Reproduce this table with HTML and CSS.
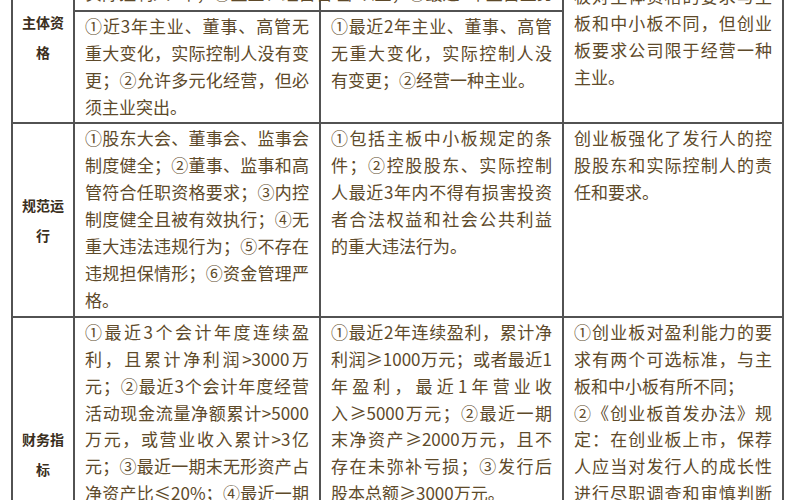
FILE: index.html
```html
<!DOCTYPE html>
<html lang="zh-CN">
<head>
<meta charset="utf-8">
<title>主板、中小板与创业板发行条件对比</title>
<link rel="stylesheet" href="styles.css">
</head>
<body>
<table class="cmp">
  <colgroup>
    <col class="c-label">
    <col class="c-main">
    <col class="c-sme">
    <col class="c-note">
  </colgroup>
  <tbody>
    <tr class="row-top">
      <td class="label" rowspan="2">主体资格</td>
      <td class="cell">
        <span class="ln">依法设立且合法存续的股份</span>
        <span class="ln end">实际控制人3年；②主业、经营管理</span>
      </td>
      <td class="cell">
        <span class="ln">有限公司，持续经营时间在</span>
        <span class="ln end">3年以上；③最近2年主营业务</span>
      </td>
      <td class="cell span-note" rowspan="2">
        <span class="ln">创业板对主体资格的要求</span>
        <span class="ln">板对主体资格的要求与主</span>
        <span class="ln">板和中小板不同，但创业</span>
        <span class="ln">板要求公司限于经营一种</span>
        <span class="ln end">主业。</span>
      </td>
    </tr>
    <tr>
      <td class="cell">
        <span class="ln">①近3年主业、董事、高管无</span>
        <span class="ln">重大变化，实际控制人没有变</span>
        <span class="ln">更；②允许多元化经营，但必</span>
        <span class="ln end">须主业突出。</span>
      </td>
      <td class="cell">
        <span class="ln">①最近2年主业、董事、高管</span>
        <span class="ln">无重大变化，实际控制人没</span>
        <span class="ln end">有变更；②经营一种主业。</span>
      </td>
    </tr>
    <tr>
      <td class="label">规范运行</td>
      <td class="cell">
        <span class="ln">①股东大会、董事会、监事会</span>
        <span class="ln">制度健全；②董事、监事和高</span>
        <span class="ln">管符合任职资格要求；③内控</span>
        <span class="ln">制度健全且被有效执行；④无</span>
        <span class="ln">重大违法违规行为；⑤不存在</span>
        <span class="ln">违规担保情形；⑥资金管理严</span>
        <span class="ln end">格。</span>
      </td>
      <td class="cell">
        <span class="ln">①包括主板中小板规定的条</span>
        <span class="ln">件；②控股股东、实际控制</span>
        <span class="ln">人最近3年内不得有损害投资</span>
        <span class="ln">者合法权益和社会公共利益</span>
        <span class="ln end">的重大违法行为。</span>
      </td>
      <td class="cell">
        <span class="ln">创业板强化了发行人的控</span>
        <span class="ln">股股东和实际控制人的责</span>
        <span class="ln end">任和要求。</span>
      </td>
    </tr>
    <tr>
      <td class="label">财务指标</td>
      <td class="cell">
        <span class="ln">①最近3个会计年度连续盈</span>
        <span class="ln">利，且累计净利润&gt;3000万</span>
        <span class="ln">元；②最近3个会计年度经营</span>
        <span class="ln">活动现金流量净额累计&gt;5000</span>
        <span class="ln">万元，或营业收入累计&gt;3亿</span>
        <span class="ln">元；③最近一期末无形资产占</span>
        <span class="ln">净资产比≤20%；④最近一期</span>
        <span class="ln">末不存在未弥补亏损；⑤发</span>
        <span class="ln end">行前股本总额≥3000万元。</span>
      </td>
      <td class="cell">
        <span class="ln">①最近2年连续盈利，累计净</span>
        <span class="ln">利润≥1000万元；或者最近1</span>
        <span class="ln">年盈利，最近1年营业收</span>
        <span class="ln">入≥5000万元；②最近一期</span>
        <span class="ln">末净资产≥2000万元，且不</span>
        <span class="ln">存在未弥补亏损；③发行后</span>
        <span class="ln end">股本总额≥3000万元。</span>
      </td>
      <td class="cell">
        <span class="ln">①创业板对盈利能力的要</span>
        <span class="ln">求有两个可选标准，与主</span>
        <span class="ln end">板和中小板有所不同；</span>
        <span class="ln">②《创业板首发办法》规</span>
        <span class="ln">定：在创业板上市，保荐</span>
        <span class="ln">人应当对发行人的成长性</span>
        <span class="ln">进行尽职调查和审慎判断</span>
        <span class="ln">并出具专项意见；发行人</span>
        <span class="ln">为自主创新企业的，还应</span>
        <span class="ln end">当说明其自主创新能力。</span>
      </td>
    </tr>
  </tbody>
</table>
</body>
</html>
```

FILE: styles.css
```css
html, body {
  margin: 0;
  padding: 0;
  background: #ffffff;
}

body {
  font-family: "Noto Sans CJK SC", "Noto Sans", sans-serif;
  color: #5e4a2a;
  overflow: hidden;
}

.cmp {
  table-layout: fixed;
  border-collapse: collapse;
  width: 771px;
  margin: -50px 0 0 11px;
}

.c-label { width: 62px; }
.c-main  { width: 246px; }
.c-sme   { width: 243px; }
.c-note  { width: 220px; }

.cmp td {
  border: 2px solid #525252;
}

.label {
  vertical-align: middle;
  text-align: center;
  padding: 0 5px;
  font-size: 14px;
  line-height: 30px;
  font-weight: 700;
  color: #3b2f1d;
}

.cell {
  vertical-align: top;
  padding: 1px 10px 2px 10px;
  font-size: 17px;
  line-height: 26.9px;
}

.row-top .cell {
  padding-bottom: 3px;
}

.row-top .span-note {
  padding-top: 4px;
}

.ln {
  display: block;
  text-align: justify;
  text-align-last: justify;
  white-space: nowrap;
}

.ln.end {
  text-align-last: left;
}
```
